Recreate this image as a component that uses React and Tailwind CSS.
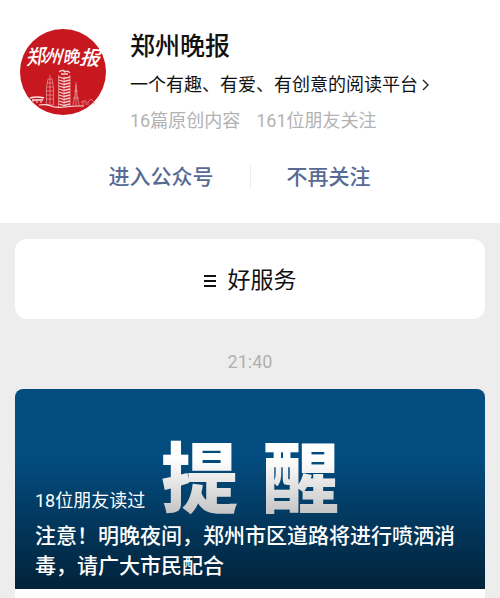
const account = {
  name: '郑州晚报',
  intro: '一个有趣、有爱、有创意的阅读平台',
  stats: ['16篇原创内容', '161位朋友关注'],
};

const article = {
  cover: ['提', '醒'],
  reads: '18位朋友读过',
  title: '注意！明晚夜间，郑州市区道路将进行喷洒消毒，请广大市民配合',
};

const LOGO_CHARS = [
  { char: '郑', x: 5, y: 35, size: 20, turn: 'rotate(-6 15 27)' },
  { char: '州', x: 24, y: 34, size: 18, turn: 'rotate(4 33 27)' },
  { char: '晚', x: 42, y: 34, size: 17, turn: 'rotate(-5 50 27)' },
  { char: '报', x: 60, y: 36, size: 20, turn: 'rotate(5 70 27)' },
];

const TOWER_FLOORS = [48, 51, 54, 57, 60, 63, 66, 69, 72, 75];

function Logo() {
  return (
    <svg viewBox="0 0 86 86" className="size-[86px] shrink-0" role="img" aria-label={account.name}>
      <circle cx="43" cy="43" r="43" fill="#c71820" />
      <g fill="#fff" fontFamily="'Noto Sans CJK SC', sans-serif" fontWeight="500" fontStyle="italic">
        {LOGO_CHARS.map(({ char, x, y, size, turn }) => (
          <text key={char} x={x} y={y} fontSize={size} transform={turn}>{char}</text>
        ))}
      </g>

      {/* Main tower */}
      <g stroke="#f6cfcf" fill="none">
        <path d="M39 43q3-3 6 0q3-2 5 1M41 45h7M43 41l3 2" strokeWidth="1.3" />
        {TOWER_FLOORS.map((y) => (
          <path key={y} d={`M39 ${y}l5 1.5l6-1.5`} strokeWidth="1.3" />
        ))}
        <path d="M38.5 46v32M44 47v31M50 46v32" strokeWidth="0.6" />
      </g>

      {/* Left pagoda, right mast and the low buildings */}
      <g stroke="#e58f92" fill="none" strokeWidth="0.8">
        <path d="M30 46v4M28 50h4l1.5 8v18h-7V58zM27 54h6M27 58h6M26 62h8M26 66h8M26 70h8M30 50v26" />
        <path d="M56 53v23M56 56l-1 10l-2 10M56 56l1 10l2 10M54 62h4M53 69h6" />
        <path d="M63 76v-4h3v4M68 76v-3l3-3l3 3v2M61 73h2" />
      </g>
      <g stroke="#fbe3e3" fill="none">
        <path d="M10 69q7-2 14 0M12 71h11" strokeWidth="1.6" />
        <path d="M13 72v1M17 72v2M21 72v2" />
        <path d="M19 76q8-1 12 1t14 1t11-1t8 0" strokeWidth="1.2" />
      </g>
    </svg>
  );
}

function ChevronIcon() {
  return (
    <svg viewBox="0 0 8 12" className="h-3 w-2 shrink-0" fill="none" stroke="#222" strokeWidth="1.4" aria-hidden="true">
      <path d="M1 1l5 5l-5 5" />
    </svg>
  );
}

function MenuIcon() {
  return (
    <svg viewBox="0 0 12 14" className="h-3.5 w-3 shrink-0" stroke="#111" strokeWidth="1.8" aria-hidden="true">
      <path d="M0 2h12M0 7h12M0 12h12" />
    </svg>
  );
}

export default function App() {
  return (
    <div className="flex min-h-screen flex-col bg-[#ededed] font-[Roboto,'Noto_Sans_CJK_SC',sans-serif] text-[#111]">
      {/* Account header */}
      <header className="bg-white pt-[29px] pb-8">
        <div className="flex gap-6 px-5">
          <Logo />
          <div className="min-w-0">
            <h1 className="text-[25px] leading-9 font-medium">{account.name}</h1>
            <a href="#intro" className="mt-2 flex items-center gap-1 text-[18px] leading-6 whitespace-nowrap">
              {account.intro}
              <ChevronIcon />
            </a>
            <p className="mt-3 flex gap-4 text-[18px] leading-6 whitespace-nowrap text-[#b2b2b2]">
              {account.stats.map((stat) => <span key={stat}>{stat}</span>)}
            </p>
          </div>
        </div>
        <div className="mt-[30px] flex items-center justify-center text-[21px] leading-7 font-medium text-[#576b95]">
          <button type="button" className="flex-1 pr-9 text-right">进入公众号</button>
          <span className="h-6 w-px bg-[#ececec]" />
          <button type="button" className="flex-1 pl-9 text-left">不再关注</button>
        </div>
      </header>

      <main className="flex flex-1 flex-col px-[15px] pt-4">
        <button type="button" className="flex h-20 w-full items-center justify-center gap-3 rounded-xl bg-white pt-1 text-[23px]">
          <MenuIcon />
          好服务
        </button>
        <time className="pt-8 pb-4 text-center text-[18px] leading-[22px] text-[#b0b0b0]">21:40</time>

        {/* Article card */}
        <a href="#article" className="block flex-1 overflow-hidden rounded-t-lg bg-white text-white">
          <div className="relative flex h-[200px] flex-col justify-end bg-[#034c7f] px-5 pb-2">
            <div className="absolute inset-x-0 top-[54px] flex justify-center gap-6 text-[77px] leading-[77px] font-black" aria-hidden="true">
              {article.cover.map((char) => <span key={char}>{char}</span>)}
            </div>
            <div className="absolute inset-x-0 bottom-0 h-[130px] bg-linear-to-b from-transparent to-black/55" />
            <p className="relative text-[18px] leading-6">{article.reads}</p>
            <h2 className="relative mt-2 text-[21px] leading-[30px] font-medium">{article.title}</h2>
          </div>
        </a>
      </main>
    </div>
  );
}
